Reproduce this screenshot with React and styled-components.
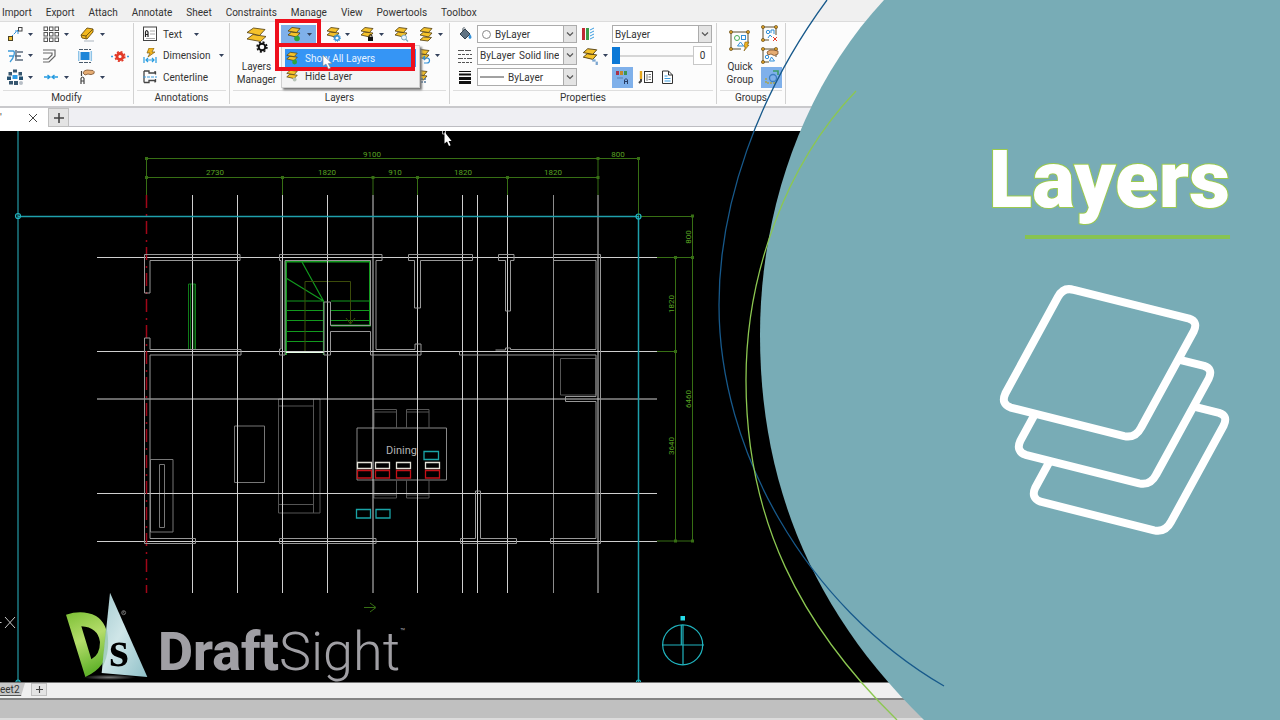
import React from "react";
import styled, { createGlobalStyle, css } from "styled-components";

const uiFont = 'Roboto, "Liberation Sans", sans-serif';

const GlobalStyle = createGlobalStyle`
  *, *::before, *::after { box-sizing: border-box; }
  body { margin: 0; background: #000; }
  button, select, input { font: inherit; color: inherit; margin: 0; padding: 0; }
  svg { display: block; flex: none; }
`;

/* ---------- page ---------- */

const Stage = styled.div`
  position: relative;
  display: flex;
  flex-direction: column;
  min-height: 100vh;
  overflow: hidden;
  background: #000;
  color: #333;
  font: 10px/13px ${uiFont};
`;

const MenuBar = styled.nav`
  display: flex;
  align-items: center;
  gap: 14px;
  height: 21px;
  padding: 4px 0 0 2px;
  background: #f0f0f0;
`;

const plainButton = css`
  border: 0;
  background: none;
  white-space: nowrap;
`;

const MenuItem = styled.button`
  ${plainButton}
`;

/* ---------- ribbon ---------- */

const Ribbon = styled.section`
  display: flex;
  height: 87px;
  padding: 1px 0 2px;
  background: #fcfcfc;
  border-top: 1px solid #dcdcdc;
  border-bottom: 2px solid #c9c9cc;
`;

const Group = styled.section`
  display: flex;
  flex-direction: column;
  width: ${(p) => p.$width}px;
  border-right: 1px solid #d2d2d2;
`;

const GroupBody = styled.div`
  flex: 1;
  display: flex;
  padding-left: ${(p) => p.$inset || 0}px;
  gap: ${(p) => p.$gap || 0}px;
`;

const GroupLabel = styled.h2`
  margin: 0 3px;
  height: 14px;
  border-top: 1px solid #dedede;
  font-size: 10px;
  font-weight: 400;
  line-height: 14px;
  text-align: center;
`;

const ToolGrid = styled.div`
  display: grid;
  grid-template-columns: 36px 36px 33px 18px;
  grid-template-rows: 22px 21px 22px;
  align-items: center;
`;

const Stack = styled.div`
  display: grid;
  grid-template-rows: 22px 21px 22px;
  align-items: center;
  justify-items: start;
`;

const Tool = styled.button`
  ${plainButton}
  display: flex;
  align-items: center;
  gap: 4px;
`;

const TextTool = styled(Tool)`
  width: ${(p) => p.$width || "auto"};
  gap: 5px;

  & > span {
    min-width: 26px;
    text-align: left;
  }

  & > :nth-child(3) {
    margin-left: auto;
  }
`;

const BigTool = styled.button`
  ${plainButton}
  width: ${(p) => p.$width}px;
  display: flex;
  flex-direction: column;
  align-items: center;
  justify-content: flex-end;
  gap: 6px;
  padding-bottom: 4px;
  white-space: normal;
`;

const LayerRow = styled.div`
  display: flex;
  align-items: center;
  gap: ${(p) => p.$gap || 4}px;
  padding-left: ${(p) => p.$inset || 0}px;
`;

const Pressed = styled.button`
  border: 0;
  background: #7fb0ea;
  display: flex;
  align-items: center;
  justify-content: center;
  gap: 5px;
  width: ${(p) => p.$width}px;
  height: ${(p) => p.$height}px;
`;

/* ---------- open drop-down with its call-outs ---------- */

const Anchor = styled.div`
  position: relative;
`;

const Callout = styled.span`
  position: absolute;
  z-index: 3;
  left: -6px;
  top: ${(p) => p.$top}px;
  width: ${(p) => p.$width}px;
  height: 28px;
  border: 4px solid #ee0f1c;
  pointer-events: none;
`;

const Popup = styled.div`
  position: absolute;
  z-index: 2;
  left: 0;
  top: 20px;
  width: 139px;
  padding: 3px 3px 2px;
  background: #f4f4f4;
  border: 1px solid #d0d0d0;
  box-shadow: 2px 2px 2px #777;
`;

const PopupItem = styled.button`
  ${plainButton}
  display: flex;
  align-items: center;
  gap: 6px;
  width: 100%;
  height: 18px;
  background: ${(p) => (p.$active ? "#3595f5" : "transparent")};
  color: ${(p) => (p.$active ? "#e8f3ff" : "#333")};
`;

const Pointer = styled.span`
  position: absolute;
  z-index: 4;
  left: 41px;
  top: 30px;
`;

/* ---------- property fields ---------- */

const Combo = styled.label`
  display: flex;
  align-items: center;
  gap: 4px;
  width: 100px;
  height: 18px;
  padding-left: ${(p) => p.$inset || 2}px;
  background: #fff;
  border: 1px solid #acacac;
`;

const ComboSelect = styled.select`
  appearance: none;
  flex: 1;
  min-width: 0;
  border: 0;
  background: none;
  text-align: ${(p) => p.$align || "left"};
`;

const ComboArrow = styled.span`
  display: flex;
  align-items: center;
  justify-content: center;
  width: 13px;
  height: 16px;
  background: #e4e4e4;
  border-left: 1px solid #acacac;
`;

const SliderRow = styled.div`
  display: flex;
  align-items: center;
  width: 100px;
`;

const Slider = styled.input`
  appearance: none;
  flex: 1;
  min-width: 0;
  height: 18px;
  background: linear-gradient(#d6d6d6, #d6d6d6) center / 100% 2px no-repeat;

  &::-webkit-slider-thumb {
    appearance: none;
    width: 8px;
    height: 17px;
    background: #0b78d6;
  }
`;

const NumberBox = styled.input`
  width: 19px;
  height: 19px;
  background: #fff;
  border: 1px solid #c8c8c8;
  text-align: center;
`;

/* ---------- document tabs ---------- */

const DocTabs = styled.div`
  display: flex;
  height: 23px;
  background: #efeff3;
  border-bottom: 4px solid #fff;
  box-shadow: inset 0 -1px #bdbdc2;
`;

const DocTab = styled.div`
  display: flex;
  align-items: center;
  justify-content: space-between;
  width: 48px;
  padding-right: 10px;
  background: #fff;
`;

const NewTab = styled.button`
  display: flex;
  align-items: center;
  justify-content: center;
  width: ${(p) => p.$size}px;
  border: 1px solid #c0c0c0;
  background: #e4e4e4;
`;

const Drawing = styled.main`
  flex: 1;
  min-height: 0;
  background: #000;

  & > svg {
    width: 100%;
    height: 100%;
  }
`;

const SheetTabs = styled.div`
  display: flex;
  gap: 6px;
  height: 16px;
  padding: 0 0 2px;
  background: #f0f0f0;
  border-top: 1px solid #777;
`;

const SheetTab = styled.button`
  ${plainButton}
  width: 25px;
  text-align: left;
  background: #c8c8c8;
  border-bottom: 1px solid #555;
  clip-path: polygon(0 0, 100% 0, 84% 100%, 0 100%);
`;

const StatusBar = styled.footer`
  height: 22px;
  background: #c0c0c0;
  border-top: 2px solid #858585;
  border-bottom: 2px solid #dcdcdc;
`;

/* ---------- brand and title panel, laid over the window ---------- */

const Brand = styled.div`
  position: absolute;
  z-index: 5;
  left: 66px;
  bottom: 36px;
  display: flex;
  align-items: flex-start;
  gap: 10px;
`;

const Wordmark = styled.div`
  display: flex;
  align-items: flex-start;
  padding-top: 28px;
  color: #a09fa4;
  font-size: 54px;
  line-height: 64px;

  & > strong {
    font-weight: 800;
  }

  & > span {
    font-weight: 300;
  }

  & > sup {
    font-size: 8px;
    line-height: 24px;
  }
`;

const TitlePanel = styled.aside`
  position: absolute;
  z-index: 6;
  top: 0;
  right: 0;
  height: 100%;
  aspect-ratio: 19 / 24;
  pointer-events: none;
`;

const PanelShape = styled.svg`
  width: 100%;
  height: 100%;
`;

const PanelContent = styled.div`
  position: absolute;
  inset: 0;
  display: flex;
  flex-direction: column;
  align-items: flex-end;
  padding: 130px 50px 0 0;
`;

const Title = styled.h1`
  margin: 0;
  color: #fff;
  font: 900 80px/100px Roboto, sans-serif;
  -webkit-text-stroke: 2px #9ccb4e;
  paint-order: stroke fill;
`;

const Rule = styled.hr`
  width: 205px;
  height: 4px;
  margin: 5px 0 46px;
  border: 0;
  background: #87c352;
`;

/* ---------- icons ---------- */

const Arrow = () => (
  <svg width="5" height="3" viewBox="0 0 5 3"><path d="M0 0h5L2.500 3z" fill="#34425c" /></svg>
);

const Svg = ({ w = 18, h = 18, box, children }) => (
  <svg width={w} height={h} viewBox={box || `0 0 ${w} ${h}`} fill="none" aria-hidden="true">{children}</svg>
);

const sheetStroke = { fill: "#f5c22b", stroke: "#4e3b10", strokeWidth: 0.8, strokeLinejoin: "round" };

const Sheets = () => (
  <>
    <path d="M2 9l3.500-3 8.500 1-3.500 4z" {...sheetStroke} />
    <path d="M2 5l4-3.500 8 1L10.500 6.500z" {...sheetStroke} />
  </>
);

const badges = {
  show: <circle cx="11" cy="12.500" r="2.800" fill="#2fa43c" />,
  gear: <g><circle cx="12" cy="12" r="2.300" stroke="#2f8fd8" strokeWidth="1.400" /><circle cx="12" cy="12" r="3.500" stroke="#2f8fd8" strokeDasharray="1 1.200" /></g>,
  lock: <g><rect x="9" y="11" width="5" height="4" fill="#111" /><path d="M10 11V9.500q1.500-2 3 0V11" stroke="#111" /></g>,
  search: <g><circle cx="11" cy="11.500" r="2.500" fill="#e8f3fa" stroke="#7ba7bd" /><path d="M13 13.500l2 2" stroke="#7ba7bd" strokeWidth="1.300" /></g>,
  double: <path d="M2 14l3.500-3 8 .5-3.500 3.500z" {...sheetStroke} />,
  undo: <path d="M8 10h4a2.500 2.500 0 010 5H9M10 8L8 10l2 2" stroke="#2f8fd8" strokeWidth="1.200" />,
  grid: <path d="M9 9v6M12 9v6M8 10h6M8 13h6" stroke="#53789b" strokeDasharray="2 1" />,
  hide: <circle cx="11" cy="12" r="2.200" fill="#b8c4b8" />,
  states: <g><rect x="10" y="11" width="3" height="2" fill="#7ca6d0" /><rect x="13" y="13" width="2" height="3" fill="#7ca6d0" /></g>,
};

const LayerIcon = ({ badge, size = 16 }) => (
  <Svg w={size} h={size} box="0 0 16 16"><Sheets />{badges[badge]}</Svg>
);

const MoveIcon = () => (
  <Svg>
    <path d="M5 12l8-8" stroke="#2f8fd8" strokeDasharray="3 1" />
    <path d="M9 6h3v3" stroke="#2f8fd8" />
    <rect x="2.500" y="11.500" width="4" height="4" fill="#f2c130" stroke="#4b4326" />
    <rect x="12.500" y="2.500" width="3.500" height="3.500" fill="#fff" stroke="#444" />
  </Svg>
);
const PatternIcon = () => (
  <Svg>
    {[2, 7.5, 13].map((x) => [2, 7.5, 13].map((y) => <rect key={`${x}-${y}`} x={x} y={y} width="3.500" height="3.500" stroke="#555" />))}
  </Svg>
);
const EraserIcon = () => (
  <Svg>
    <path d="M3 10L9 3l6 1v3l-6 7-5-1z" fill="#f3b81d" stroke="#6b4f10" strokeWidth=".9" />
    <path d="M3 10l5 1v3M8 11l7-7" stroke="#6b4f10" strokeWidth=".9" />
    <path d="M6 16h10" stroke="#aab4be" />
  </Svg>
);
const TrimIcon = () => (
  <Svg>
    <path d="M2 4h5q2 0 1 4t-4 7M3 9h5" stroke="#3d9bd9" strokeWidth="1.300" />
    <path d="M10 3v11M11 5h6M9 9h6M11 13h6" stroke="#596a7c" strokeWidth="1.400" />
  </Svg>
);
const OffsetIcon = () => (
  <Svg>
    <path d="M1 3h12v6l-6 6H1M1 6h9v2l-4 4H1" stroke="#666" strokeWidth="1.200" />
  </Svg>
);
const BlockIcon = () => (
  <Svg>
    <rect x="2.500" y="5" width="9" height="8" fill="#1f86d8" />
    <path d="M1 2.500h12M1 15.500h12" stroke="#4a5a6a" strokeDasharray="4 1" />
    <path d="M.700 4v10M13.300 4v10" stroke="#8ec4e8" strokeWidth="1.500" />
  </Svg>
);
const ExplodeIcon = () => (
  <Svg>
    <path d="M0 9.500h2M16 9.500h2" stroke="#3a9de0" strokeWidth="1.500" />
    <circle cx="9" cy="9.500" r="3" stroke="#e23a28" strokeWidth="2.800" />
    <circle cx="9" cy="9.500" r="4.800" stroke="#e23a28" strokeWidth="1.600" strokeDasharray="2 1.770" />
  </Svg>
);
const ArrayIcon = () => (
  <Svg>
    <rect x="7" y="1.500" width="4" height="3" fill="#36566f" />
    <rect x="2.500" y="4" width="3.500" height="3.500" fill="#36566f" />
    <rect x="12.500" y="4" width="3.500" height="3.500" fill="#36566f" />
    <rect x="1" y="8.500" width="4" height="3.500" fill="#24506f" />
    <rect x="6.500" y="7" width="5" height="4" fill="#2b9be6" />
    <rect x="13" y="8.500" width="4" height="3.500" fill="#24506f" />
    <rect x="3" y="13" width="4" height="3.500" fill="#36566f" />
    <rect x="8" y="13" width="4" height="4" fill="#36566f" />
    <circle cx="15" cy="15" r="2" fill="#b7bec6" />
  </Svg>
);
const JoinIcon = () => (
  <Svg>
    <path d="M2 9h6M16 9h-6M5.500 7l2.500 2-2.500 2M12.500 7L10 9l2.500 2" stroke="#269be0" strokeWidth="1.400" />
  </Svg>
);
const MatchIcon = () => (
  <Svg>
    <path d="M5 5q1-3 4-3l6 .5q2 1 1 3-3 2-6 .5L7 7z" fill="#e6ac72" stroke="#7a5230" strokeWidth=".8" />
    <path d="M3.500 8V3M3 16v-5.500q1.500-3 3 0V16M3 13h3" stroke="#444" strokeWidth="1.200" />
  </Svg>
);

const NoteIcon = () => (
  <Svg w={16} h={16}>
    <rect x="1.500" y="1" width="13" height="13.500" fill="#fff" stroke="#444" />
    <path d="M3.500 11V6q1-3 2.500 0v5M3.500 8.500H6" stroke="#222" strokeWidth="1.200" />
    <path d="M8 5h5M8 8h5M4 12.500h9" stroke="#aaa" />
  </Svg>
);
const DimensionIcon = () => (
  <Svg w={16} h={16}>
    <path d="M7 0h5L10 4h3L6 9l2-4H5z" fill="#f3b41d" stroke="#7c5d12" strokeWidth=".7" />
    <path d="M2 9v6M14 9v6M4 12h8M6 10l-2 2 2 2M10 10l2 2-2 2" stroke="#269be0" strokeWidth="1.200" />
  </Svg>
);
const CenterlineIcon = () => (
  <Svg w={16} h={16}>
    <path d="M2 2h5v2h6V2M2 13.500h5v-2h6v2M2 2v11.500M13.500 2.500v3M13.500 10v3" stroke="#444" strokeWidth="1.300" />
    <path d="M1 8h14" stroke="#3a9de0" strokeDasharray="3 1" />
  </Svg>
);
const ManagerIcon = () => (
  <Svg w={26} h={28}>
    <path d="M3 13l6-4.500 13 2-5.500 5z" {...sheetStroke} />
    <path d="M3 6.500L9.500 2 21 3.500l-5.500 6z" {...sheetStroke} />
    <circle cx="18" cy="21" r="3.300" stroke="#111" strokeWidth="2" />
    <circle cx="18" cy="21" r="4.900" stroke="#111" strokeWidth="1.600" strokeDasharray="2 1.850" />
  </Svg>
);

const PaintIcon = () => (
  <Svg w={16} h={16}>
    <path d="M3 8l5-5 5 5-5 5z" fill="#617383" stroke="#33424e" />
    <path d="M6 5V2.500q1-2 2 0" stroke="#33424e" />
    <path d="M13 8q3 4 0 5-3-1 0-5z" fill="#2f8fd8" />
  </Svg>
);
const LineStyleIcon = () => (
  <Svg w={16} h={16}>
    <path d="M1 2.500h14" stroke="#555" strokeDasharray="6 1" />
    <path d="M1 6.500h14M1 14.500h14" stroke="#555" strokeDasharray="3 1" />
    <path d="M1 10.500h14" stroke="#555" strokeDasharray="5 1 2 1" />
  </Svg>
);
const LineWeightIcon = () => (
  <Svg w={16} h={16}>
    <path d="M2 2.500h12" stroke="#111" />
    <path d="M2 5.500h12" stroke="#111" strokeWidth="2" />
    <path d="M2 9.500h12M2 13.500h12" stroke="#111" strokeWidth="3" />
  </Svg>
);
const HatchIcon = () => (
  <Svg w={14} h={14}>
    <rect x="1" y="1" width="3" height="12" fill="#c02a35" />
    <rect x="5" y="1" width="3" height="12" fill="#3b9c48" />
    <path d="M9 3l4-2M9 6l4-2M9 9l4-2M9 12l4-2" stroke="#3a9de0" />
  </Svg>
);
const PaletteIcon = () => (
  <Svg w={16} h={16}>
    <rect x="1" y="2" width="3" height="4" fill="#a8324a" />
    <rect x="5" y="2" width="3" height="4" fill="#c0882c" />
    <rect x="9" y="2" width="3" height="4" fill="#3c9455" />
    <path d="M2 9h6" stroke="#5b7fae" />
    <path d="M9.500 15v-4q1.500-3 3 0v4M9.500 12.500h3" stroke="#2a3f66" />
  </Svg>
);
const BrushIcon = () => (
  <Svg w={16} h={16}>
    <path d="M3 2v8" stroke="#e7a81e" strokeWidth="2.400" />
    <path d="M3 10v2L1 14" stroke="#444" strokeWidth="2" />
    <rect x="6.500" y="2.500" width="8" height="11" fill="#fff" stroke="#333" />
    <path d="M9 5v7M10.500 5.500H13M10.500 8H13M10.500 10.500H13" stroke="#777" />
  </Svg>
);
const PageIcon = () => (
  <Svg w={16} h={16}>
    <path d="M3.500 2h6l4 4v8.500h-10z" fill="#fff" stroke="#333" />
    <path d="M9.500 2v4h4" stroke="#333" />
    <path d="M5.500 7h3M5.500 9.500h6M5.500 12h6" stroke="#3a9de0" />
  </Svg>
);

const Frame = ({ s }) => (
  <>
    <path d={`M2 2H${s}V${s - 5}M2 2V${s}H${s - 7}`} stroke="#5b4c2c" />
    {[[2, 2], [s, 2], [2, s]].map(([x, y]) => (
      <circle key={`${x}-${y}`} cx={x} cy={y} r="1.600" fill="#d89c25" stroke="#5b4310" strokeWidth=".6" />
    ))}
  </>
);
const QuickGroupIcon = () => (
  <Svg w={22} h={24}>
    <Frame s={19} />
    <circle cx="8" cy="8" r="2.500" stroke="#44ad55" />
    <rect x="12.500" y="5.500" width="4" height="4" stroke="#2f8fd8" />
    <path d="M8.500 16l3-4 3 4z" stroke="#2f8fd8" />
    <path d="M16 12h4l-2 3h2l-5 6 1.500-4H15z" fill="#f3b41d" stroke="#7c5d12" strokeWidth=".6" />
  </Svg>
);
const UngroupIcon = () => (
  <Svg w={18} h={18}>
    <Frame s={15} />
    <circle cx="7" cy="7" r="1.700" stroke="#2f8fd8" />
    <path d="M10 8V5h3v4M7 13l2-3 2 2" stroke="#2f8fd8" />
    <path d="M12 12l4 4M16 12l-4 4" stroke="#e23a28" />
  </Svg>
);
const EditGroupIcon = () => (
  <Svg w={18} h={18}>
    <Frame s={15} />
    <circle cx="6" cy="10" r="1.700" stroke="#2f8fd8" />
    <path d="M8.500 14l2-4 3 4z" stroke="#2f8fd8" />
    <path d="M6 5q3-3 6-2l5 1v3q-4 3-7 0L7 8z" fill="#e6ac72" stroke="#7a5230" strokeWidth=".8" />
  </Svg>
);
const SelectGroupIcon = () => (
  <Svg w={18} h={18}>
    <circle cx="10" cy="10" r="3.500" stroke="#3d7fc2" strokeWidth="1.300" />
    <path d="M3 10v5h9" stroke="#a9a34f" strokeDasharray="2 1" strokeWidth="1.500" />
    <path d="M10 3h5v4" stroke="#3d9c68" strokeWidth="1.600" />
  </Svg>
);

const Chevron = () => (
  <Svg w={8} h={5}><path d="M1 .5l3 3 3-3" stroke="#555" strokeWidth="1.200" /></Svg>
);
const Plus = ({ size }) => (
  <Svg w={size} h={size} box="0 0 10 10"><path d="M5 0v10M0 5h10" stroke="#444" strokeWidth="1.600" /></Svg>
);
const PointerShape = () => (
  <Svg w={11} h={15}><path d="M1 0v11l3-2 2.500 5 2-1-2.300-4.500H10z" fill="#fff" stroke="#888" strokeWidth=".6" /></Svg>
);

/* ---------- floor plan ---------- */

const columns = [192.5, 237.5, 282.5, 327.5, 373, 417.5, 462.5, 477.5, 507.5, 553.5, 598];
const rows = [257.5, 351.5, 399, 493.5, 541.5];
const dimensions = [
  [372, 157, "9100"], [215, 175, "2730"], [327, 175, "1820"], [395, 175, "910"],
  [463, 175, "1820"], [553, 175, "1820"], [618, 157, "800"],
];
const sideDimensions = [[691, 237, "800"], [674, 304, "1820"], [691, 399, "6460"], [674, 446, "3640"]];
const ticks = [
  [146.5, 158.5], [598, 158.5], [638.5, 158.5], [146.5, 177.5], [282.5, 177.5], [373, 177.5], [417.5, 177.5],
  [507.5, 177.5], [598, 177.5], [692.5, 216], [692.5, 257.5], [675.5, 257.5], [675.5, 351.5], [675.5, 541], [692.5, 541],
];

const FloorPlan = () => (
  <svg viewBox="0 131 1280 551" preserveAspectRatio="xMinYMin slice" fill="none" role="img" aria-label="Floor plan drawing">
    <g stroke="#376f14">
      <path d="M146.500 158.500H638.500V216M146.500 177.500H598M146.500 158V195M282.500 177V195M373 177V195M417.500 177V195M507.500 177V195M598 158V195" />
      <path d="M640 216.500H692.500V541H657M657 257.500H692.500M675.500 257V541M657 351.500H675.500" />
      <path d="M364 607.500h11M370 603l6 4.500-6 4.500" />
    </g>
    {ticks.map(([x, y]) => <rect key={`${x}-${y}`} x={x - 1.5} y={y - 1.5} width="3" height="3" fill="#376f14" />)}
    <g fill="#58a322" fontFamily="Roboto, sans-serif" fontSize="8" textAnchor="middle">
      {dimensions.map(([x, y, t]) => <text key={`${x}-${y}`} x={x} y={y}>{t}</text>)}
      {sideDimensions.map(([x, y, t]) => (
        <text key={`${x}-${y}`} transform={`translate(${x} ${y}) rotate(-90)`}>{t}</text>
      ))}
    </g>

    <g stroke="#555">
      <path d="M278.500 399H320V513H278.500zM313.500 399V513M278.500 406H313.500M278.500 504.500H313.500" />
      <path d="M234.500 426H264.500V482.500H234.500z" stroke="#777" />
      <path d="M150.500 459.500H173V532H150.500zM159.500 464.500H164.500V527.500H159.500z" stroke="#777" />
      <path d="M357 428H446.500V480H357z" stroke="#888" />
      <path d="M374 428V409.500H396.500V428M374 412H396.500M406.500 428V409.500H429V428M406.500 412H429M374 480V498H396.500V480M374 495H396.500M406.500 480V498H429V480M406.500 495H429" />
      <path d="M560.500 358.500H596V395H560.500z" />
    </g>

    <g stroke="#129a1e">
      <path d="M188.500 349V284h7V349M190.500 349V284M194 349V284" strokeWidth=".8" />
      <path d="M286 355V261.500H370V325.500H331" strokeWidth="2" />
      <path d="M323.500 301L302 262M323.500 301L286 278M286 301h37.500V355M286 310.500h37M286 320.500h37M286 331.500h37M286 341.500h37M331 301h38M331 310.500h38M331 320.500h38" strokeWidth="1.200" />
      <path d="M305 352V281.500H350.500V324M346 318l4.500 6 4.500-6" stroke="#3c4c0a" />
    </g>
    <path d="M286 352h38" stroke="#e8ffe8" strokeWidth="2" />

    <g stroke="#cfcfcf">
      {columns.map((x) => <path key={x} d={`M${x} 195V593`} stroke={x === 553.5 ? "#8c8c8c" : undefined} />)}
      {rows.map((y) => <path key={y} d={`M97 ${y}H657`} />)}
    </g>
    <path d="M146.500 195V593" stroke="#a00718" strokeWidth="1.500" strokeDasharray="13 6 2 5" />

    <g stroke="#979797">
      <path d="M144.500 254.500H240V260.500H150V293H144.500z" />
      <path d="M144.500 338H150V349.500H241V355H150V538.500H195.500V543.500H144.500z" />
      <path d="M279.500 254.500H382V260.500H376V349.500H415V344H421V355H370.500V331.500H330.500V355H324V302H330.500V325.500H370.500V260.500H285V355H279.500V349H281V260.500H279.500z" />
      <path d="M408.500 254.500H472.500V260.500H420.500V308H414.500V260.500H408.500z" />
      <path d="M498.500 254.500H514V260.500H510.500V311H505.500V260.500H498.500z" />
      <path d="M495.500 350H505.500V348H510.500V349.500H596V260.500H553.500V254.500H600.500V543.500H550.500V538.500H596V401.500H565.500V396.500H596V355H459.500V351.500" />
      <path d="M279.500 538.500H376V543.500H279.500z" />
      <path d="M460.500 538.500H475.500V491H480.500V538.500H516.500V543.500H460.500z" />
    </g>

    <g strokeWidth="1.300">
      <path d="M357.500 462.500h14v6h-14zM375.500 462.500h14v6h-14zM396.500 462.500h14v6h-14zM425.500 462.500h14v6h-14z" stroke="#e4e2d8" />
      <path d="M357.500 470.500h14v7.500h-14zM375.500 470.500h14v7.500h-14zM396.500 470.500h14v7.500h-14zM425.500 470.500h14v7.500h-14z" stroke="#c41218" />
      <path d="M424 451.500h14.500v8H424zM356.500 509.500h14v8.500h-14zM376 509.500h14v8.500h-14z" stroke="#1aa3a6" />
    </g>
    <text x="386" y="454" fill="#b4b4b4" fontFamily="Roboto, sans-serif" fontSize="11">Dining</text>

    <path d="M18 131V682" stroke="#1c7b85" strokeWidth="1.500" />
    <path d="M18 216.500H638.500V682" stroke="#1fa0ac" strokeWidth="1.500" />
    <g stroke="#20b4bf" strokeWidth="1.200">
      <circle cx="18" cy="216" r="2.500" />
      <circle cx="638.500" cy="216.500" r="2.500" />
      <circle cx="18" cy="682" r="2" />
      <circle cx="638.500" cy="682" r="2" />
      <circle cx="682.700" cy="644.800" r="20" />
      <path d="M662 645H704M683 625V665M681.300 625V645" />
    </g>
    <rect x="680.500" y="616" width="4.500" height="4.500" fill="#26dce8" />
    <path d="M5 617l10 11M15 617L5 628M0 622.500h1.500" stroke="#c8c8c8" />
    <path d="M442.500 131v3h3v-3" stroke="#aaa" />
    <path d="M444.500 132v11.500l2.500-2 2 4.500 1.600-.8-2-4.200h3z" fill="#fff" />
  </svg>
);

const BrandMark = () => (
  <svg width="82" height="89" viewBox="200 36 246 267" role="img" aria-label="DraftSight mark">
    <defs>
      <linearGradient id="leaf" x1="0" y1="0" x2="0.300" y2="1">
        <stop offset="0" stopColor="#7cbf35" /><stop offset=".5" stopColor="#b5dd6b" /><stop offset="1" stopColor="#63b32c" />
      </linearGradient>
      <linearGradient id="sail" x1="0" y1="0" x2="1" y2="1">
        <stop offset="0" stopColor="#a5cbd0" /><stop offset=".45" stopColor="#cfe6e8" /><stop offset="1" stopColor="#8fc0c8" />
      </linearGradient>
      <radialGradient id="floor"><stop offset="0" stopColor="#777" /><stop offset="1" stopColor="#777" stopOpacity="0" /></radialGradient>
    </defs>
    <ellipse cx="330" cy="292" rx="80" ry="8" fill="url(#floor)" />
    <path fillRule="evenodd" fill="url(#leaf)" d="M200 104Q250 88 290 108Q326 130 327 190Q325 262 258 291ZM246 139Q296 142 302 186Q302 224 276 238Z" />
    <path d="M332 38L444 291L307 279Z" fill="url(#sail)" />
    <path d="M320 135Q337 210 309 262L307 279Z" fill="#78b58e" opacity=".45" />
    <text x="330" y="259" fontFamily="Liberation Serif, serif" fontWeight="700" fontSize="150" fill="#000">s</text>
    <circle cx="373" cy="98" r="6" fill="none" stroke="#999" strokeWidth="2" />
    <path d="M371 101v-6h4l-2 3 3 3" fill="none" stroke="#999" strokeWidth="1.500" />
  </svg>
);

const layerOutline = "M264 532Q281 501 312 511L658 597Q686 606 672 635L514 924Q497 957 463 950L122 864Q92 853 106 822Z";

const LayersArt = () => (
  <svg width="231" height="251" viewBox="88 496 692 754" role="img" aria-label="Stacked layers">
    <g fill="#78acb6" stroke="#fff" strokeWidth="24" strokeLinejoin="round">
      <path d={layerOutline} transform="translate(90 283)" />
      <path d={layerOutline} transform="translate(45 142)" />
      <path d={layerOutline} />
    </g>
  </svg>
);

/* ---------- data ---------- */

const menus = ["Import", "Export", "Attach", "Annotate", "Sheet", "Constraints", "Manage", "View", "Powertools", "Toolbox"];

const modifyTools = [
  ["Move", MoveIcon, true], ["Pattern", PatternIcon, true], ["Erase", EraserIcon, true], null,
  ["Trim", TrimIcon, true], ["Offset", OffsetIcon, false], ["Block", BlockIcon, false], ["Explode", ExplodeIcon, false],
  ["Array", ArrayIcon, true], ["Join", JoinIcon, true], ["Match", MatchIcon, true], null,
];

export default function App() {
  return (
    <Stage>
      <GlobalStyle />
      <MenuBar aria-label="Main menu">
        {menus.map((m) => <MenuItem key={m}>{m}</MenuItem>)}
      </MenuBar>

      <Ribbon>
        <Group $width={134}>
          <GroupBody $inset={6}>
            <ToolGrid>
              {modifyTools.map((t, i) => {
                if (!t) return <span key={i} />;
                const [name, Icon, more] = t;
                return <Tool key={name} aria-label={name}><Icon />{more && <Arrow />}</Tool>;
              })}
            </ToolGrid>
          </GroupBody>
          <GroupLabel>Modify</GroupLabel>
        </Group>

        <Group $width={96}>
          <GroupBody $inset={8}>
            <Stack>
              <TextTool $width="55px"><NoteIcon /><span>Text</span><Arrow /></TextTool>
              <TextTool $width="82px"><DimensionIcon /><span>Dimension</span><Arrow /></TextTool>
              <TextTool><CenterlineIcon /><span>Centerline</span></TextTool>
            </Stack>
          </GroupBody>
          <GroupLabel>Annotations</GroupLabel>
        </Group>

        <Group $width={220}>
          <GroupBody $inset={6} $gap={4}>
            <BigTool $width={41}><ManagerIcon />Layers Manager</BigTool>
            <Stack>
              <LayerRow $gap={9}>
                <Anchor>
                  <Pressed $width={35} $height={18} aria-label="Show layers" aria-expanded="true">
                    <LayerIcon badge="show" /><Arrow />
                  </Pressed>
                  <Callout $top={-6} $width={46} />
                  <Popup>
                    <PopupItem $active><LayerIcon badge="show" size={14} />Show All Layers</PopupItem>
                    <PopupItem><LayerIcon badge="hide" size={14} />Hide Layer</PopupItem>
                  </Popup>
                  <Callout $top={18} $width={140} />
                  <Pointer><PointerShape /></Pointer>
                </Anchor>
                <Tool aria-label="Layer settings"><LayerIcon badge="gear" /><Arrow /></Tool>
                <Tool aria-label="Lock layer"><LayerIcon badge="lock" /><Arrow /></Tool>
                <Tool aria-label="Find layer"><LayerIcon badge="search" /></Tool>
                <Tool aria-label="Merge layers"><LayerIcon badge="double" /><Arrow /></Tool>
              </LayerRow>
              <LayerRow $inset={134}>
                <Tool aria-label="Restore layer"><LayerIcon badge="undo" /><Arrow /></Tool>
              </LayerRow>
              <LayerRow $inset={132}>
                <Tool aria-label="Layer list"><LayerIcon badge="grid" /></Tool>
              </LayerRow>
            </Stack>
          </GroupBody>
          <GroupLabel>Layers</GroupLabel>
        </Group>

        <Group $width={267}>
          <GroupBody $inset={7} $gap={4}>
            <Stack>
              <PaintIcon /><LineStyleIcon /><LineWeightIcon />
            </Stack>
            <Stack>
              <Combo $inset={4}>
                <Svg w={9} h={9}><circle cx="4.500" cy="4.500" r="4" stroke="#888" /></Svg>
                <ComboSelect aria-label="Line color"><option>ByLayer</option></ComboSelect>
                <ComboArrow><Chevron /></ComboArrow>
              </Combo>
              <Combo>
                <span>ByLayer</span>
                <ComboSelect aria-label="Line style" $align="right"><option>Solid line</option></ComboSelect>
                <ComboArrow><Chevron /></ComboArrow>
              </Combo>
              <Combo>
                <Svg w={24} h={2}><path d="M0 1h24" stroke="#444" /></Svg>
                <ComboSelect aria-label="Line weight"><option>ByLayer</option></ComboSelect>
                <ComboArrow><Chevron /></ComboArrow>
              </Combo>
            </Stack>
            <Stack>
              <Tool aria-label="Hatch"><HatchIcon /></Tool>
              <Tool aria-label="Layer states"><LayerIcon badge="states" size={18} /><Arrow /></Tool>
            </Stack>
            <Stack>
              <Combo>
                <ComboSelect aria-label="Print style"><option>ByLayer</option></ComboSelect>
                <ComboArrow><Chevron /></ComboArrow>
              </Combo>
              <SliderRow>
                <Slider type="range" min="0" max="90" defaultValue="0" aria-label="Transparency" />
                <NumberBox defaultValue="0" aria-label="Transparency value" />
              </SliderRow>
              <LayerRow $gap={5}>
                <Pressed $width={21} $height={21} aria-label="Property palette"><PaletteIcon /></Pressed>
                <Tool aria-label="Property painter"><BrushIcon /></Tool>
                <Tool aria-label="Properties"><PageIcon /></Tool>
              </LayerRow>
            </Stack>
          </GroupBody>
          <GroupLabel>Properties</GroupLabel>
        </Group>

        <Group $width={69}>
          <GroupBody $inset={6} $gap={4}>
            <BigTool $width={34}><QuickGroupIcon />Quick Group</BigTool>
            <Stack>
              <Tool aria-label="Ungroup"><UngroupIcon /></Tool>
              <Tool aria-label="Edit group"><EditGroupIcon /></Tool>
              <Pressed $width={21} $height={21} aria-label="Group selection"><SelectGroupIcon /></Pressed>
            </Stack>
          </GroupBody>
          <GroupLabel>Groups</GroupLabel>
        </Group>
      </Ribbon>

      <DocTabs>
        <DocTab>
          <span>'</span>
          <Tool aria-label="Close tab"><Svg w={10} h={10}><path d="M1 1l8 8M9 1L1 9" stroke="#444" /></Svg></Tool>
        </DocTab>
        <NewTab $size={21} aria-label="New drawing"><Plus size={10} /></NewTab>
      </DocTabs>

      <Drawing><FloorPlan /></Drawing>

      <SheetTabs>
        <SheetTab>eet2</SheetTab>
        <NewTab $size={16} aria-label="New sheet"><Plus size={7} /></NewTab>
      </SheetTabs>
      <StatusBar />

      <Brand>
        <BrandMark />
        <Wordmark><strong>Draft</strong><span>Sight</span><sup>™</sup></Wordmark>
      </Brand>

      <TitlePanel>
        <PanelShape viewBox="710 0 570 720" fill="none" aria-hidden="true">
          <path d="M884 0C800 90 760 215 760 335C760 475 806 605 924 720H1280V0Z" fill="#78acb6" />
          <path d="M827 0C757 95 719 205 719 305C719 450 805 605 944 686" stroke="#17598b" strokeWidth="1.300" />
          <path d="M856 91C785 165 746 275 746 380C746 520 800 625 897 720" stroke="#8cc751" strokeWidth="1.300" />
        </PanelShape>
        <PanelContent>
          <Title>Layers</Title>
          <Rule />
          <LayersArt />
        </PanelContent>
      </TitlePanel>
    </Stage>
  );
}
